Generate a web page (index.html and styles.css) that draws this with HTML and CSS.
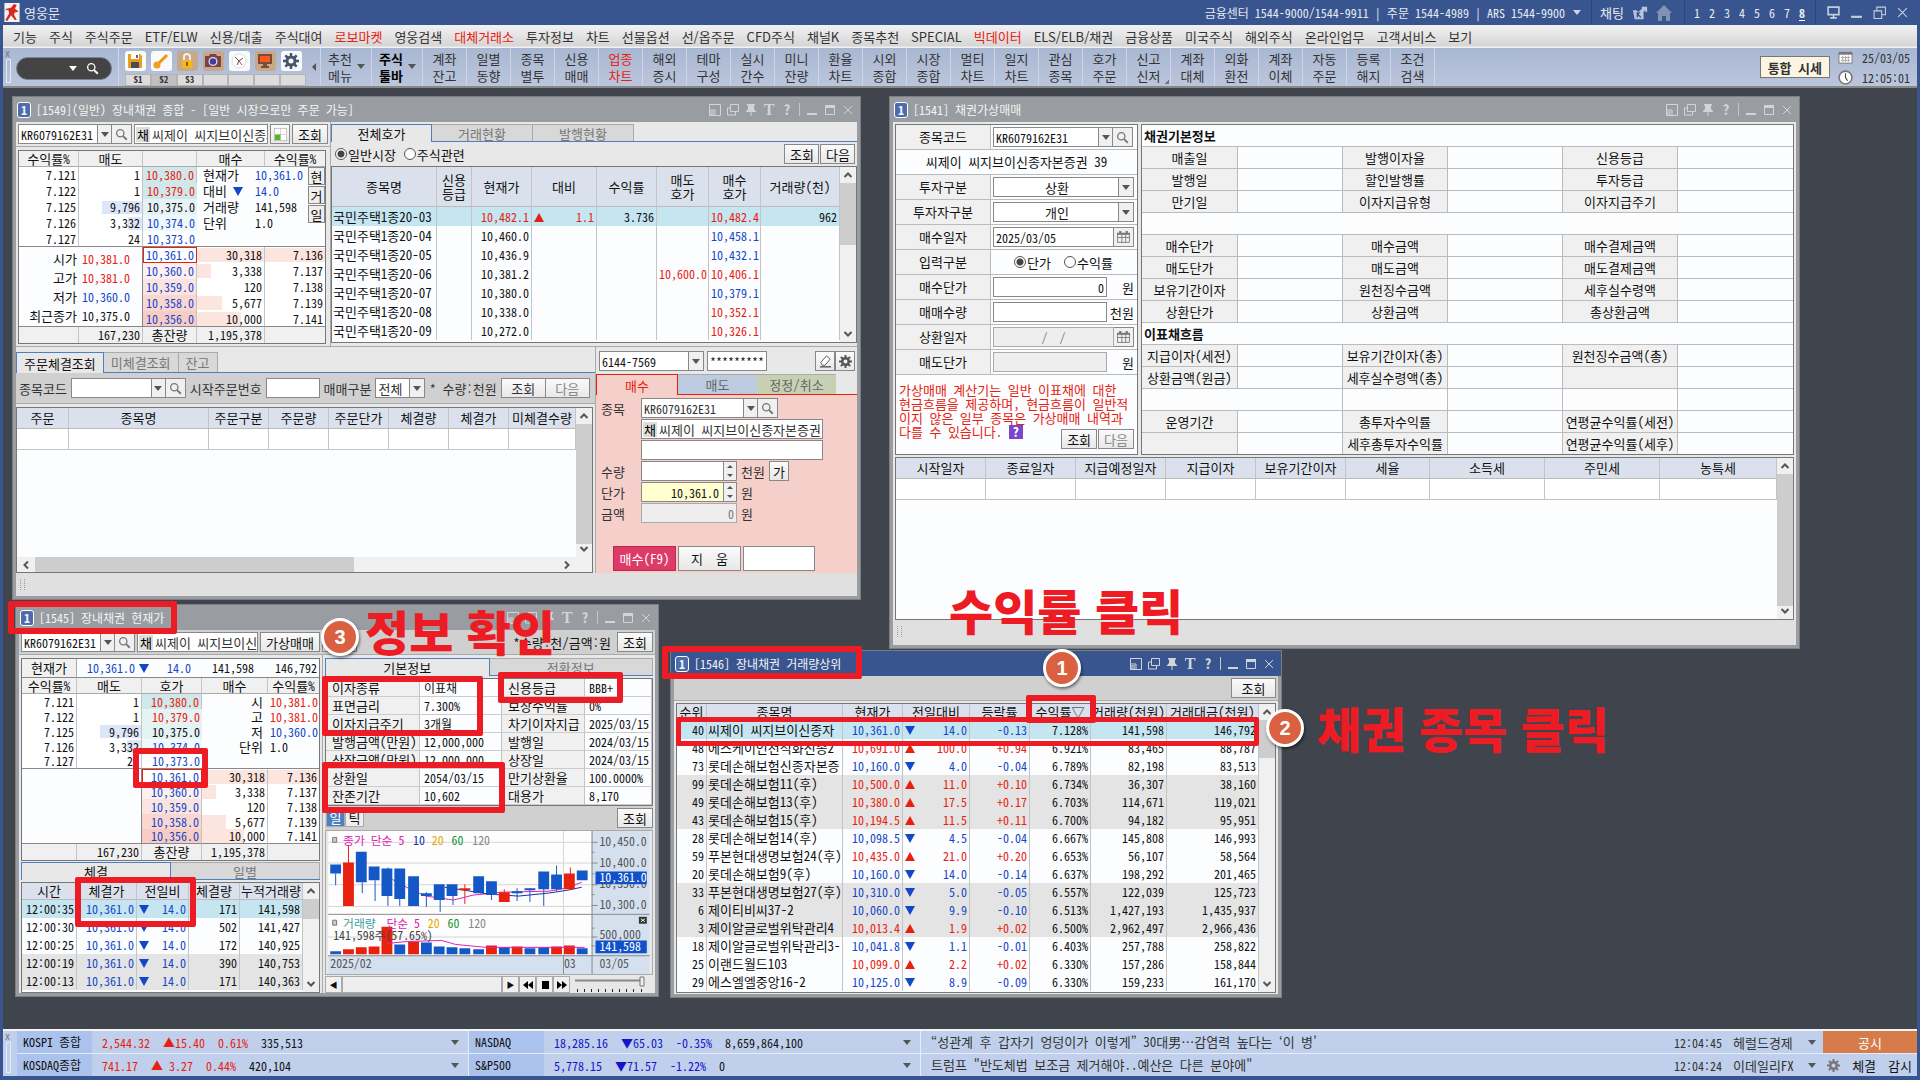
FILE: index.html
```html
<!DOCTYPE html>
<html lang="ko">
<head>
  <meta charset="UTF-8" />
  <title>영웅문</title>
  <link rel="stylesheet" href="styles.css">
</head>
<body>

  <!-- shared icons -->
  <svg class="defs" aria-hidden="true">
    <symbol id="i-search" viewBox="0 0 16 16"><circle cx="6.5" cy="6.5" r="4.5" fill="none" stroke="currentColor" stroke-width="1.6"/><path d="M10 10l4.5 4.5" stroke="currentColor" stroke-width="2.4"/></symbol>
    <symbol id="i-corner" viewBox="0 0 12 12"><path d="M.5 6V.5h11v11H6M.5 6v5.5H6V6z" fill="none" stroke="currentColor"/><path d="M1 7h4v4H1z" fill="currentColor" opacity=".6"/></symbol>
    <symbol id="i-copy" viewBox="0 0 12 12"><path d="M3.500 .5h8v7h-8zM3 4H.5v7h8V8" fill="none" stroke="currentColor"/></symbol>
    <symbol id="i-pin" viewBox="0 0 12 12"><path d="M2 0h8v1.500H9V5l2.500 3H.5L3 5V1.500H2zM5.500 8h1v4h-1z" fill="currentColor"/></symbol>
    <symbol id="i-min" viewBox="0 0 12 12"><path d="M1 9h10v2H1z" fill="currentColor"/></symbol>
    <symbol id="i-max" viewBox="0 0 12 12"><path d="M1.500 2.500h9v8h-9z" fill="none" stroke="currentColor"/><path d="M1 1h10v3H1z" fill="currentColor"/></symbol>
    <symbol id="i-close" viewBox="0 0 12 12"><path d="M2 2l8 8M10 2l-8 8" stroke="currentColor" fill="none"/></symbol>
    <symbol id="i-cal" viewBox="0 0 12 12"><path d="M.5 2.500h11v8H.5zM.5 6h11M4.500 3v8M8 3v8" fill="none" stroke="currentColor" stroke-width=".8"/><path d="M0 1.500h12v2H0zM2 0h2v2H2zM8 0h2v2H8z" fill="currentColor"/></symbol>
    <symbol id="i-gear" viewBox="0 0 16 16"><circle cx="8" cy="8" r="4" fill="none" stroke="currentColor" stroke-width="3"/><path d="M8 0v4M8 12v4M0 8h4M12 8h4M2.300 2.300L5 5M11 11l2.700 2.700M13.700 2.300L11 5M5 11l-2.700 2.700" stroke="currentColor" stroke-width="2.500"/></symbol>
    <symbol id="i-up" viewBox="0 0 10 10"><path d="M1.500 7L5 3.500 8.500 7" fill="none" stroke="currentColor" stroke-width="2"/></symbol>
    <symbol id="i-down" viewBox="0 0 10 10"><path d="M1.500 3L5 6.500 8.500 3" fill="none" stroke="currentColor" stroke-width="2"/></symbol>
    <symbol id="i-left" viewBox="0 0 10 10"><path d="M7 1.500L3.500 5 7 8.500" fill="none" stroke="currentColor" stroke-width="2"/></symbol>
    <symbol id="i-right" viewBox="0 0 10 10"><path d="M3 1.500L6.500 5 3 8.500" fill="none" stroke="currentColor" stroke-width="2"/></symbol>
  </svg>

  <header class="app-title">
    <svg class="logo" viewBox="0 0 16 20"><path d="M0 0h16v20H0z" fill="#f2f2f2"/><path d="M10 1l3 1-2 4 4 3-4 1-1 2 3 6h-2l-4-5-4 6-2-1 4-7-1-4-3 1 1-2 5-1z" fill="#d8281c"/></svg>
    <span>영웅문</span>
    <div class="contact">금융센터 1544-9000/1544-9911 | 주문 1544-4989 | ARS 1544-9900 <i class="tri"></i></div>
    <div class="chat">채팅
      <svg viewBox="0 0 18 16"><path d="M1 5h4l2 2 3-3h3v11H3zM11 1h6v6h-2V5l-4 3z" fill="#b9c4dc"/><path d="M6 7v6M6 10l3-3M7 10l3 3" stroke="#39558f" stroke-width="1.500" fill="none"/></svg>
      <svg viewBox="0 0 16 16"><path d="M8 0l8 8h-2v8h-4v-5H6v5H2V8H0z" fill="#8292b5"/></svg>
    </div>
    <nav class="pages"><a href="#">1</a><a href="#">2</a><a href="#">3</a><a href="#">4</a><a href="#">5</a><a href="#">6</a><a href="#">7</a><a href="#" class="on">8</a></nav>
    <div class="sys">
      <button aria-label="모니터"><svg viewBox="0 0 12 12"><path d="M1 1h10v7H1zM6 8v3M3 11h6" fill="none" stroke="currentColor" stroke-width="1.500"/></svg></button>
      <button aria-label="최소화"><svg><use href="#i-min"/></svg></button>
      <button aria-label="이전 크기"><svg viewBox="0 0 12 12"><path d="M1 4.500h7v7H1zM3.500 4V1h8v7H8" fill="none" stroke="currentColor"/></svg></button>
      <button aria-label="닫기"><svg><use href="#i-close"/></svg></button>
    </div>
  </header>

  <nav class="menu">
    <a href="#">기능</a><a href="#">주식</a><a href="#">주식주문</a><a href="#">ETF/ELW</a><a href="#">신용/대출</a><a href="#">주식대여</a><a href="#" class="red">로보마켓</a><a href="#">영웅검색</a><a href="#" class="red">대체거래소</a><a href="#">투자정보</a><a href="#">차트</a><a href="#">선물옵션</a><a href="#">선/옵주문</a><a href="#">CFD주식</a><a href="#">채널K</a><a href="#">종목추천</a><a href="#">SPECIAL</a><a href="#" class="red">빅데이터</a><a href="#">ELS/ELB/채권</a><a href="#">금융상품</a><a href="#">미국주식</a><a href="#">해외주식</a><a href="#">온라인업무</a><a href="#">고객서비스</a><a href="#">보기</a>
  </nav>

  <div class="toolbar">
    <div class="grip"><span>x</span><i></i></div>
    <div class="pill"><i class="tri"></i><svg><use href="#i-search"/></svg></div>
    <div class="quick">
      <div class="quick-icons">
        <button aria-label="저장"><svg viewBox="0 0 16 16"><path d="M1 1h12l2 2v12H1z" fill="#e8a020"/><path d="M4 1h8v5H4z" fill="#fff"/><path d="M4 9h8v6H4z" fill="#4b4b55"/><path d="M9 2h2v3H9z" fill="#666"/></svg></button>
        <button aria-label="도구"><svg viewBox="0 0 16 16"><path d="M14 2L4 12" stroke="#f0960e" stroke-width="3"/><circle cx="4" cy="12" r="3.500" fill="#f0a020"/></svg></button>
        <button class="tan" aria-label="잠금"><svg viewBox="0 0 16 16"><path d="M5 7V4a3 3 0 016 0v3" fill="none" stroke="#eee" stroke-width="2"/><path d="M3 7h10v8H3z" fill="#f4b81c"/><path d="M7 9h2v4H7z" fill="#8a5a00"/></svg></button>
        <button class="tan" aria-label="캡처"><svg viewBox="0 0 16 16"><path d="M0 3h4l1-2h6l1 2h4v11H0z" fill="#7b4048"/><circle cx="8" cy="8.500" r="4.500" fill="#ddd"/><circle cx="8" cy="8.500" r="3.200" fill="#463a9a"/></svg></button>
        <button aria-label="시계"><svg viewBox="0 0 16 16"><circle cx="8" cy="8" r="7" fill="#fff" stroke="#ddd"/><path d="M4 4l4 4 4-3M8 8l-2 4" stroke="#555" fill="none"/><path d="M8 8l3 4" stroke="#e33"/></svg></button>
        <button class="tan" aria-label="화면"><svg viewBox="0 0 16 16"><path d="M1 1h14v10H1zM6 11h4v2H6zM4 13h8v2H4z" fill="#7a4a3c"/><path d="M3 3h10v6H3z" fill="#fb5a1e"/></svg></button>
        <button aria-label="설정"><svg><use href="#i-gear"/></svg></button>
      </div>
      <div class="sets"><span>S1</span><span class="on">S2</span><span>S3</span><span></span><span></span><span></span><span></span></div>
    </div>
    <i class="back"></i>
    <button class="tool wide">추천<br>메뉴<i class="tri"></i></button>
    <button class="tool wide now">주식<br>툴바<i class="tri"></i></button>
    <div class="tools">
      <button class="tool">계좌<br>잔고</button><button class="tool">일별<br>동향</button><button class="tool">종목<br>별투</button><button class="tool">신용<br>매매</button><button class="tool red">업종<br>차트</button><button class="tool">해외<br>증시</button><button class="tool">테마<br>구성</button><button class="tool">실시<br>간수</button><button class="tool">미니<br>잔량</button><button class="tool">환율<br>차트</button><button class="tool">시외<br>종합</button><button class="tool">시장<br>종합</button><button class="tool">멀티<br>차트</button><button class="tool">일지<br>차트</button><button class="tool">관심<br>종목</button><button class="tool">호가<br>주문</button><button class="tool more">신고<br>신저</button><button class="tool">계좌<br>대체</button><button class="tool">외화<br>환전</button><button class="tool">계좌<br>이체</button><button class="tool">자동<br>주문</button><button class="tool">등록<br>해지</button><button class="tool">조건<br>검색</button>
    </div>
    <button class="unified">통합 시세</button>
    <div class="clock">
      <div><svg viewBox="0 0 16 14"><path d="M1 2h14v11H1z" fill="#fff" stroke="#777"/><path d="M1 1h14v3H1z" fill="#777"/><path d="M3 7h10M3 10h10M5 5v7M8 5v7M11 5v7" stroke="#aaa"/></svg>25/03/05</div>
      <div><svg viewBox="0 0 14 14"><circle cx="7" cy="7" r="6" fill="#fff" stroke="#777" stroke-width="1.500"/><path d="M7 3v4l2 3" stroke="#444" fill="none"/></svg>12:05:01</div>
    </div>
  </div>

  <main class="desk">

    <!-- 1549 -->
    <section class="win w1549">
      <div class="bar"><b>1</b><span>[1549](일반) 장내채권 종합 - [일반 시장으로만 주문 가능]</span>
        <div class="ctl"><button aria-label="도킹"><svg><use href="#i-corner"/></svg></button><button aria-label="복제"><svg><use href="#i-copy"/></svg></button><button aria-label="고정"><svg><use href="#i-pin"/></svg></button><button class="ser">T</button><button>?</button><i></i><button aria-label="최소화"><svg><use href="#i-min"/></svg></button><button aria-label="최대화"><svg><use href="#i-max"/></svg></button><button aria-label="닫기"><svg><use href="#i-close"/></svg></button></div>
      </div>
      <div class="body">
        <div class="top">
          <div class="left">
            <div class="code-row">
              <div class="combo"><input class="code" value="KR6079162E31" aria-label="종목코드"><button aria-label="목록"><i class="tri"></i></button><button aria-label="검색"><svg><use href="#i-search"/></svg></button></div>
              <div class="name"><em>채</em>씨제이 씨지브이신종자</div>
              <button class="btn sq" aria-label="화면분할"><svg viewBox="0 0 14 14"><path d="M0 0h14v14H0z" fill="#fff" stroke="#888"/><path d="M1 7h6v6H1z" fill="#56b52c"/><path d="M7 1v12M1 7h12" stroke="#aaa" stroke-dasharray="1 1"/></svg></button>
              <button class="btn">조회</button>
            </div>
            <table class="book">
              <colgroup><col class="c60"><col class="c64"><col class="c54"><col class="c68"><col></colgroup>
              <tr class="hd"><th>수익률%</th><th>매도</th><th></th><th>매수</th><th>수익률%</th></tr>
              <tr><td>7.121</td><td>1</td><td class="a1 up">10,380.0</td>
                <td colspan="2" rowspan="5" class="info">
                  <dl><dt>현재가</dt><dd class="dn">10,361.0</dd><dt>대비 <i class="d"></i></dt><dd class="dn">14.0</dd><dt>거래량</dt><dd>141,598</dd><dt>단위</dt><dd>1.0</dd></dl>
                  <div class="side"><button>현</button><button>거</button><button>일</button></div>
                </td></tr>
              <tr><td>7.122</td><td>1</td><td class="a1 up">10,379.0</td></tr>
              <tr><td>7.125</td><td class="ask" style="--bar:40px">9,796</td><td class="a2">10,375.0</td></tr>
              <tr><td>7.126</td><td class="ask" style="--bar:14px">3,332</td><td class="a3 dn">10,374.0</td></tr>
              <tr class="cut"><td>7.127</td><td>24</td><td class="dn">10,373.0</td></tr>
              <tr><td colspan="2" rowspan="5" class="ohlc">
                  <dl><dt>시가</dt><dd class="up">10,381.0</dd><dt>고가</dt><dd class="up">10,381.0</dd><dt>저가</dt><dd class="dn">10,360.0</dd><dt>최근종가</dt><dd>10,375.0</dd></dl></td>
                <td class="dn cur">10,361.0</td><td class="bid" style="--bar:100%">30,318</td><td class="bid" style="--bar:100%">7.136</td></tr>
              <tr><td class="b1 dn">10,360.0</td><td class="bid" style="--bar:14px">3,338</td><td>7.137</td></tr>
              <tr><td class="b2 dn">10,359.0</td><td>120</td><td>7.138</td></tr>
              <tr><td class="b3 dn">10,358.0</td><td class="bid" style="--bar:25px">5,677</td><td>7.139</td></tr>
              <tr class="cut"><td class="b4 dn">10,356.0</td><td class="bid" style="--bar:44px">10,000</td><td>7.141</td></tr>
              <tr class="hd"><td></td><td>167,230</td><td class="c">총잔량</td><td>1,195,378</td><td></td></tr>
            </table>
          </div>
          <div class="right">
            <div class="tabs t100"><button class="on">전체호가</button><button>거래현황</button><button>발행현황</button></div>
            <div class="opts"><label><input type="radio" name="mk" checked>일반시장</label><label><input type="radio" name="mk">주식관련</label><button class="btn push">조회</button><button class="btn">다음</button></div>
            <div class="grid">
              <table class="bonds">
                <colgroup><col class="c105"><col class="c35"><col class="c60"><col class="c65"><col class="c60"><col class="c52"><col class="c52"><col></colgroup>
                <tr><th>종목명</th><th>신용<br>등급</th><th>현재가</th><th>대비</th><th>수익률</th><th>매도<br>호가</th><th>매수<br>호가</th><th>거래량(천)</th></tr>
                <tr class="sel"><td class="l">국민주택1종20-03</td><td></td><td class="up">10,482.1</td><td class="up chg"><i class="u"></i>1.1</td><td>3.736</td><td></td><td class="up">10,482.4</td><td>962</td></tr>
                <tr><td class="l">국민주택1종20-04</td><td></td><td>10,460.0</td><td></td><td></td><td></td><td class="dn">10,458.1</td><td></td></tr>
                <tr><td class="l">국민주택1종20-05</td><td></td><td>10,436.9</td><td></td><td></td><td></td><td class="dn">10,432.1</td><td></td></tr>
                <tr><td class="l">국민주택1종20-06</td><td></td><td>10,381.2</td><td></td><td></td><td class="up">10,600.0</td><td class="up">10,406.1</td><td></td></tr>
                <tr><td class="l">국민주택1종20-07</td><td></td><td>10,380.0</td><td></td><td></td><td></td><td class="dn">10,379.1</td><td></td></tr>
                <tr><td class="l">국민주택1종20-08</td><td></td><td>10,338.0</td><td></td><td></td><td></td><td class="up">10,352.1</td><td></td></tr>
                <tr><td class="l">국민주택1종20-09</td><td></td><td>10,272.0</td><td></td><td></td><td></td><td class="up">10,326.1</td><td></td></tr>
              </table>
              <div class="vs"><svg><use href="#i-up"/></svg><i class="h60"></i><svg><use href="#i-down"/></svg></div>
            </div>
          </div>
        </div>

        <div class="mid">
          <div class="fills">
            <div class="tabs auto"><button class="on">주문체결조회</button><button>미체결조회</button><button>잔고</button></div>
            <div class="search">
              <label for="fcode">종목코드</label>
              <div class="combo"><input id="fcode" class="fc"><button aria-label="목록"><i class="tri"></i></button><button aria-label="검색"><svg><use href="#i-search"/></svg></button></div>
              <label for="fno">시작주문번호</label><input id="fno" class="fno">
              <label for="fkind">매매구분</label><div class="pick p50"><select id="fkind"><option>전체</option></select></div>
              <span>* 수량:천원</span>
              <button class="btn b45">조회</button><button class="btn b45 off">다음</button>
            </div>
            <div class="grid">
              <div class="cols">
                <table class="orders">
                  <colgroup><col class="c52"><col class="c140"><col class="c60"><col class="c60"><col class="c60"><col class="c60"><col class="c60"><col></colgroup>
                  <tr><th>주문</th><th>종목명</th><th>주문구분</th><th>주문량</th><th>주문단가</th><th>체결량</th><th>체결가</th><th>미체결수량</th></tr>
                  <tr><td></td><td></td><td></td><td></td><td></td><td></td><td></td><td></td></tr>
                </table>
                <div class="hs"><svg><use href="#i-left"/></svg><i></i><svg><use href="#i-right"/></svg></div>
              </div>
              <div class="vs"><svg><use href="#i-up"/></svg><i class="full"></i><svg><use href="#i-down"/></svg><span></span></div>
            </div>
          </div>

          <div class="order">
            <div class="acct">
              <div class="pick p105"><select aria-label="계좌" class="acno"><option>6144-7569</option></select></div>
              <input class="pw" value="*********" aria-label="비밀번호">
              <button class="btn sq push" aria-label="지우기"><svg viewBox="0 0 14 14"><path d="M2 8l6-7 4 3.500L6.500 11H3.500z" fill="#fff" stroke="#555"/><path d="M1 12h12v1.500H1z" fill="#555"/></svg></button><button class="btn sq" aria-label="설정"><svg><use href="#i-gear"/></svg></button>
            </div>
            <div class="otabs"><button class="buy">매수</button><button class="sell">매도</button><button class="fix">정정/취소</button></div>
            <div class="oform">
              <label for="oc">종목</label><div class="combo"><input id="oc" class="oc" value="KR6079162E31"><button aria-label="목록"><i class="tri"></i></button><button aria-label="검색"><svg><use href="#i-search"/></svg></button></div>
              <span></span><div class="name w182"><em>채</em>씨제이 씨지브이신종자본증권</div>
              <span></span><div class="name w182"></div>
              <label for="oq">수량</label><div class="unit"><input id="oq"><span class="spin"><i></i><i></i></span>천원<button class="btn sq ga">가</button></div>
              <label for="op">단가</label><div class="unit"><input id="op" class="yel" value="10,361.0"><span class="spin"><i></i><i></i></span>원</div>
              <label for="oa">금액</label><div class="unit"><input id="oa" class="dis" value="0" disabled>원</div>
            </div>
            <div class="obtn"><button class="go">매수(F9)</button><button class="btn">지　움</button><button class="btn blank" aria-label="메모"></button></div>
          </div>
        </div>
        <div class="status"></div>
      </div>
    </section>

    <!-- 1541 -->
    <section class="win w1541">
      <div class="bar"><b>1</b><span>[1541] 채권가상매매</span>
        <div class="ctl"><button aria-label="도킹"><svg><use href="#i-corner"/></svg></button><button aria-label="복제"><svg><use href="#i-copy"/></svg></button><button aria-label="고정"><svg><use href="#i-pin"/></svg></button><button>?</button><i></i><button aria-label="최소화"><svg><use href="#i-min"/></svg></button><button aria-label="최대화"><svg><use href="#i-max"/></svg></button><button aria-label="닫기"><svg><use href="#i-close"/></svg></button></div>
      </div>
      <div class="body">
        <div class="calc">
          <div class="calc-in">
            <div class="fr"><label for="cc">종목코드</label><div class="combo"><input id="cc" class="cc" value="KR6079162E31"><button aria-label="목록"><i class="tri"></i></button><button aria-label="검색"><svg><use href="#i-search"/></svg></button></div></div>
            <div class="fr one">씨제이 씨지브이신종자본증권 39</div>
            <div class="fr"><label for="c1">투자구분</label><div class="pick full"><select id="c1" class="mid-t"><option>상환</option></select></div></div>
            <div class="fr"><label for="c2">투자자구분</label><div class="pick full"><select id="c2" class="mid-t"><option>개인</option></select></div></div>
            <div class="fr"><label for="c3">매수일자</label><div class="combo"><input id="c3" class="cd" value="2025/03/05"><button aria-label="달력"><svg><use href="#i-cal"/></svg></button></div></div>
            <div class="fr"><span class="lb">입력구분</span><div class="rad"><label><input type="radio" name="in" checked>단가</label><label><input type="radio" name="in">수익률</label></div></div>
            <div class="fr"><label for="c4">매수단가</label><div class="num"><input id="c4" value="0"><span>원</span></div></div>
            <div class="fr"><label for="c5">매매수량</label><div class="num"><input id="c5"><span>천원</span></div></div>
            <div class="fr"><label for="c6">상환일자</label><div class="combo"><input id="c6" class="cd dis slash" value="/  /" disabled><button aria-label="달력"><svg><use href="#i-cal"/></svg></button></div></div>
            <div class="fr"><label for="c7">매도단가</label><div class="num"><input id="c7" class="dis" disabled><span>원</span></div></div>
            <div class="warn">
              <p>가상매매 계산기는 일반 이표채에 대한<br>현금흐름을 제공하며, 현금흐름이 일반적<br>이지 않은 일부 종목은 가상매매 내역과<br>다를 수 있습니다. <b>?</b></p>
              <div><button class="btn">조회</button><button class="btn off">다음</button></div>
            </div>
          </div>
          <table class="facts">
            <colgroup><col class="c96"><col class="c105"><col class="c105"><col class="c115"><col class="c115"><col></colgroup>
            <tr><td colspan="6" class="h">채권기본정보</td></tr>
            <tr><th>매출일</th><td></td><th>발행이자율</th><td></td><th>신용등급</th><td></td></tr>
            <tr><th>발행일</th><td></td><th>할인발행률</th><td></td><th>투자등급</th><td></td></tr>
            <tr><th>만기일</th><td></td><th>이자지급유형</th><td></td><th>이자지급주기</th><td></td></tr>
            <tr><td colspan="6"></td></tr>
            <tr><th>매수단가</th><td></td><th>매수금액</th><td></td><th>매수결제금액</th><td></td></tr>
            <tr><th>매도단가</th><td></td><th>매도금액</th><td></td><th>매도결제금액</th><td></td></tr>
            <tr><th>보유기간이자</th><td></td><th>원천징수금액</th><td></td><th>세후실수령액</th><td></td></tr>
            <tr><th>상환단가</th><td></td><th>상환금액</th><td></td><th>총상환금액</th><td></td></tr>
            <tr><td colspan="6" class="h">이표채흐름</td></tr>
            <tr><th>지급이자(세전)</th><td></td><th>보유기간이자(총)</th><td></td><th>원천징수금액(총)</th><td></td></tr>
            <tr><th>상환금액(원금)</th><td></td><th>세후실수령액(총)</th><td></td><th></th><td></td></tr>
            <tr><td colspan="2"></td><td></td><td></td><td></td><td></td></tr>
            <tr><th>운영기간</th><td></td><th>총투자수익률</th><td></td><th>연평균수익률(세전)</th><td></td></tr>
            <tr><th></th><td></td><th>세후총투자수익률</th><td></td><th>연평균수익률(세후)</th><td></td></tr>
          </table>
        </div>
        <div class="grid flow">
          <table class="orders">
            <colgroup><col class="c90"><col class="c90"><col class="c90"><col class="c90"><col class="c90"><col class="c84"><col class="c115"><col class="c115"><col></colgroup>
            <tr><th>시작일자</th><th>종료일자</th><th>지급예정일자</th><th>지급이자</th><th>보유기간이자</th><th>세율</th><th>소득세</th><th>주민세</th><th>농특세</th></tr>
            <tr><td></td><td></td><td></td><td></td><td></td><td></td><td></td><td></td><td></td></tr>
          </table>
          <div class="vs"><svg><use href="#i-up"/></svg><i class="full"></i><svg><use href="#i-down"/></svg></div>
        </div>
        <div class="status"></div>
      </div>
    </section>

    <!-- 1545 -->
    <section class="win w1545">
      <div class="bar"><b>1</b><span>[1545] 장내채권 현재가</span>
        <div class="ctl"><button aria-label="도킹"><svg><use href="#i-corner"/></svg></button><button aria-label="복제"><svg><use href="#i-copy"/></svg></button><button aria-label="고정"><svg><use href="#i-pin"/></svg></button><button class="ser">T</button><button>?</button><i></i><button aria-label="최소화"><svg><use href="#i-min"/></svg></button><button aria-label="최대화"><svg><use href="#i-max"/></svg></button><button aria-label="닫기"><svg><use href="#i-close"/></svg></button></div>
      </div>
      <div class="body">
        <div class="code-row gray">
          <div class="combo"><input class="code" value="KR6079162E31" aria-label="종목코드"><button aria-label="목록"><i class="tri"></i></button><button aria-label="검색"><svg><use href="#i-search"/></svg></button></div>
          <div class="name w120"><em>채</em>씨제이 씨지브이신</div>
          <button class="btn">가상매매</button><button class="btn b35" aria-label="주문"></button>
          <span class="push">*수량:천/금액:원</span><button class="btn look">조회</button>
        </div>
        <div class="split">
          <div class="left">
            <table class="now-row"><tr><th>현재가</th><td class="dn">10,361.0</td><td class="dn chg"><i class="d"></i>14.0</td><td>141,598</td><td>146,792</td></tr></table>
            <table class="book small">
              <colgroup><col class="c55"><col class="c65"><col class="c60"><col class="c66"><col></colgroup>
              <tr class="hd"><th>수익률%</th><th>매도</th><th>호가</th><th>매수</th><th>수익률%</th></tr>
              <tr><td>7.121</td><td>1</td><td class="a1 up">10,380.0</td>
                <td colspan="2" rowspan="5" class="info"><dl class="r"><dt>시</dt><dd class="up">10,381.0</dd><dt>고</dt><dd class="up">10,381.0</dd><dt>저</dt><dd class="dn">10,360.0</dd><dt>단위</dt><dd>1.0</dd></dl></td></tr>
              <tr><td>7.122</td><td>1</td><td class="a2 up">10,379.0</td></tr>
              <tr><td>7.125</td><td class="ask" style="--bar:41px">9,796</td><td class="a2">10,375.0</td></tr>
              <tr><td>7.126</td><td class="ask" style="--bar:14px">3,332</td><td class="a3 dn">10,374.0</td></tr>
              <tr class="cut"><td>7.127</td><td>24</td><td class="dn">10,373.0</td></tr>
              <tr><td colspan="2" rowspan="5" class="ohlc"></td><td class="dn cur">10,361.0</td><td class="bid" style="--bar:100%">30,318</td><td class="bid" style="--bar:100%">7.136</td></tr>
              <tr><td class="b1 dn">10,360.0</td><td class="bid" style="--bar:14px">3,338</td><td>7.137</td></tr>
              <tr><td class="b2 dn">10,359.0</td><td>120</td><td>7.138</td></tr>
              <tr><td class="b3 dn">10,358.0</td><td class="bid" style="--bar:24px">5,677</td><td>7.139</td></tr>
              <tr class="cut"><td class="b4 dn">10,356.0</td><td class="bid" style="--bar:42px">10,000</td><td>7.141</td></tr>
              <tr class="hd"><td></td><td>167,230</td><td class="c">총잔량</td><td>1,195,378</td><td></td></tr>
            </table>
            <div class="tabs half"><button class="on">체결</button><button>일별</button></div>
            <div class="grid">
              <table class="ticks">
                <colgroup><col class="c55"><col class="c60"><col class="c52"><col class="c51"><col></colgroup>
                <tr><th>시간</th><th>체결가</th><th>전일비</th><th>체결량</th><th>누적거래량</th></tr>
                <tr class="sel"><td>12:00:35</td><td class="dn">10,361.0</td><td class="dn chg"><i class="d"></i>14.0</td><td>171</td><td>141,598</td></tr>
                <tr><td>12:00:30</td><td class="dn">10,361.0</td><td class="dn chg"><i class="d"></i>14.0</td><td>502</td><td>141,427</td></tr>
                <tr><td>12:00:25</td><td class="dn">10,361.0</td><td class="dn chg"><i class="d"></i>14.0</td><td>172</td><td>140,925</td></tr>
                <tr class="alt"><td>12:00:19</td><td class="dn">10,361.0</td><td class="dn chg"><i class="d"></i>14.0</td><td>390</td><td>140,753</td></tr>
                <tr class="alt"><td>12:00:13</td><td class="dn">10,361.0</td><td class="dn chg"><i class="d"></i>14.0</td><td>171</td><td>140,363</td></tr>
              </table>
              <div class="vs"><svg><use href="#i-up"/></svg><i class="h20"></i><svg><use href="#i-down"/></svg></div>
            </div>
          </div>
          <div class="right">
            <div class="tabs half"><button class="on">기본정보</button><button>전환정보</button></div>
            <table class="basic">
              <colgroup><col class="c94"><col class="c82"><col class="c83"><col></colgroup>
              <tr><th>이자종류</th><td>이표채</td><th>신용등급</th><td>BBB+</td></tr>
              <tr><th>표면금리</th><td>7.300%</td><th>보장수익률</th><td>0%</td></tr>
              <tr><th>이자지급주기</th><td>3개월</td><th>차기이자지급</th><td>2025/03/15</td></tr>
              <tr><th>발행금액(만원)</th><td>12,000,000</td><th>발행일</th><td>2024/03/15</td></tr>
              <tr><th>상장금액(만원)</th><td>12,000,000</td><th>상장일</th><td>2024/03/15</td></tr>
              <tr><th>상환일</th><td>2054/03/15</td><th>만기상환율</th><td>100.0000%</td></tr>
              <tr><th>잔존기간</th><td>10,602</td><th>대용가</th><td>8,170</td></tr>
            </table>
            <div class="cbar"><button class="on">일</button><button>틱</button><button class="btn push">조회</button></div>
            <svg class="chart" viewBox="0 0 326 145">
              <path d="M0 0h326v145H0z" fill="#fdfdfe"/><path d="M267 0h59v145h-59zM0 126h326v19H0z" fill="#d5e0ef"/>
              <path d="M0 11.500h266M0 32.500h266M0 54.500h266M0 76.500h266M0 107.500h266M238.500 0v126" stroke="#d4d4d4"/>
              <path d="M0 84.500h326M267.500 0v145M0 126.500h326M238.500 126v19M267 11.500h6M267 32.500h6M267 54.500h6M267 75.500h6M267 107.500h6M267 21.500h3M267 43.500h3M267 64.500h3M267 98.500h3M267 116.500h3" stroke="#888" fill="none"/>
              <path d="M7.500 43v12M34.500 52v11M47.500 50v21M60.500 37v39M72.500 66v10M99.500 62v15M113.500 66v16M126.500 62v13M165.500 62v8M191.500 58v13M204.500 58v14M218.500 58v18M231.500 35v26" stroke="#1458c8"/>
              <path d="M20.500 14v20M138.500 54v20M178.500 59v6M245.500 37v8" stroke="#e8210f"/>
              <path d="M65 49l18 10 16 7 28 4 20-5 30-3 47-1 17-3 16-6" fill="none" stroke="#e020b0"/>
              <path d="M118 57l20 3 25 4 30 2 30-3 20-3 14-3" fill="none" stroke="#1530a0"/>
              <path d="M2 34h11v9H2zM28 21h11v31H28zM41 36h11v14H41zM54 38h11v28H54zM67 38h11v31H67zM81 46h11v30H81zM94 63h11v3H94zM107 54h11v16h-11zM120 54h11v12h-11zM147 46h11v17h-11zM160 51h11v14h-11zM186 61h11v2h-11zM199 58h11v2h-11zM213 41h11v18h-11zM226 44h11v15h-11zM252 40h11v10h-11z" fill="#1458c8"/>
              <path d="M15 32h11v44H15zM133 58h11v2h-11zM173 62h11v10h-11zM239 43h11v16h-11z" fill="#e8210f"/>
              <path d="M2 122h11v3H2zM67 115h11v10H67zM94 113h11v12H94zM107 117h11v8h-11zM120 118h11v7h-11zM133 119h11v6h-11zM147 120h11v5h-11zM173 118h11v7h-11zM199 119h11v6h-11zM213 118h11v7h-11zM252 119h11v6h-11z" fill="#1458c8"/>
              <path d="M15 120h11v5H15zM28 118h11v7H28zM41 117h11v8H41zM54 97h11v28H54zM81 112h11v13H81zM160 116h11v9h-11zM186 117h11v8h-11zM226 117h11v8h-11zM239 116h11v9h-11z" fill="#e8210f"/>
              <path d="M60 114l20-2 35-1 14 4 31 3h65l35 0" fill="none" stroke="#e020b0"/>
              <path d="M4.500 6.500h4v5h-4zM4.500 90.500h4v5h-4z" fill="#ccc" stroke="#777"/>
              <path d="M315 87h8v7h-8z" fill="#333"/><path d="M317 89l4 3M321 89l-4 3" stroke="#fff"/>
              <text x="275" y="58" fill="#555">10,350.0</text>
              <path d="M271 41h52v13h-52zM271 111h52v13h-52z" fill="#1050c8"/>
              <text x="15" y="14" fill="#e020b0">종가 단순 5</text><text x="86" y="14" fill="#1530b0">10</text><text x="105" y="14" fill="#e8a800">20</text><text x="125" y="14" fill="#109830">60</text><text x="146" y="14" fill="#888">120</text>
              <text x="15" y="98" fill="#40a0a0">거래량</text><text x="59" y="98" fill="#e020b0">단순 5</text><text x="101" y="98" fill="#e8a800">20</text><text x="121" y="98" fill="#109830">60</text><text x="142" y="98" fill="#888">120</text>
              <text x="5" y="111" fill="#444">141,598주(57.65%)</text>
              <text x="275" y="15" fill="#555">10,450.0</text><text x="275" y="36" fill="#555">10,400.0</text><text x="275" y="79" fill="#555">10,300.0</text><text x="275" y="52" fill="#fff">10,361.0</text>
              <text x="275" y="110" fill="#555">500,000</text><text x="275" y="122" fill="#fff">141,598</text>
              <text x="2" y="139" fill="#555">2025/02</text><text x="239" y="139" fill="#555">03</text><text x="275" y="139" fill="#555">03/05</text>
            </svg>
            <div class="play"><button aria-label="이전">◀</button><span></span><button aria-label="다음">▶</button><button aria-label="빨리 뒤로"><svg viewBox="0 0 10 8"><path d="M5 0v8L0 4zM10 0v8L5 4z"/></svg></button><button aria-label="정지"><svg viewBox="0 0 10 8"><path d="M2 0h7v8H2z"/></svg></button><button aria-label="빨리 앞으로"><svg viewBox="0 0 10 8"><path d="M0 0v8l5-4zM5 0v8l5-4z"/></svg></button>
              <svg class="slide" viewBox="0 0 70 16"><path d="M0 4.500h66" stroke="#888" stroke-width="2"/><path d="M65 1h4v9h-4z" fill="#eee" stroke="#777"/><path d="M2.500 13v3M9.500 13v3M16.500 13v3M23.500 13v3M30.500 13v3M37.500 13v3M44.500 13v3M51.500 13v3M58.500 13v3M66.500 13v3" stroke="#222"/></svg></div>
          </div>
        </div>
      </div>
    </section>

    <!-- 1546 -->
    <section class="win w1546 active">
      <div class="bar"><b>1</b><span>[1546] 장내채권 거래량상위</span>
        <div class="ctl"><button aria-label="도킹"><svg><use href="#i-corner"/></svg></button><button aria-label="복제"><svg><use href="#i-copy"/></svg></button><button aria-label="고정"><svg><use href="#i-pin"/></svg></button><button class="ser">T</button><button>?</button><i></i><button aria-label="최소화"><svg><use href="#i-min"/></svg></button><button aria-label="최대화"><svg><use href="#i-max"/></svg></button><button aria-label="닫기"><svg><use href="#i-close"/></svg></button></div>
      </div>
      <div class="body">
        <div class="code-row gray"><button class="btn b45 push">조회</button></div>
        <div class="grid rank">
          <table class="ticks">
            <colgroup><col class="c30"><col class="c136"><col class="c60"><col class="c67"><col class="c60"><col class="c61"><col class="c76"><col></colgroup>
            <tr><th>순위</th><th>종목명</th><th>현재가</th><th>전일대비</th><th>등락률</th><th>수익률▽</th><th>거래량(천원)</th><th>거래대금(천원)</th></tr>
            <tr class="sel"><td>40</td><td class="l">씨제이 씨지브이신종자</td><td class="dn">10,361.0</td><td class="dn chg"><i class="d"></i>14.0</td><td class="dn">-0.13</td><td>7.128%</td><td>141,598</td><td>146,792</td></tr>
            <tr><td>48</td><td class="l">에스케이인천석화신종2</td><td class="up">10,691.0</td><td class="up chg"><i class="u"></i>100.0</td><td class="up">+0.94</td><td>6.921%</td><td>83,465</td><td>88,787</td></tr>
            <tr><td>73</td><td class="l">롯데손해보험신종자본증</td><td class="dn">10,160.0</td><td class="dn chg"><i class="d"></i>4.0</td><td class="dn">-0.04</td><td>6.789%</td><td>82,198</td><td>83,513</td></tr>
            <tr class="alt"><td>99</td><td class="l">롯데손해보험11(후)</td><td class="up">10,500.0</td><td class="up chg"><i class="u"></i>11.0</td><td class="up">+0.10</td><td>6.734%</td><td>36,307</td><td>38,160</td></tr>
            <tr class="alt"><td>49</td><td class="l">롯데손해보험13(후)</td><td class="up">10,380.0</td><td class="up chg"><i class="u"></i>17.5</td><td class="up">+0.17</td><td>6.703%</td><td>114,671</td><td>119,021</td></tr>
            <tr class="alt"><td>43</td><td class="l">롯데손해보험15(후)</td><td class="up">10,194.5</td><td class="up chg"><i class="u"></i>11.5</td><td class="up">+0.11</td><td>6.700%</td><td>94,182</td><td>95,951</td></tr>
            <tr><td>28</td><td class="l">롯데손해보험14(후)</td><td class="dn">10,098.5</td><td class="dn chg"><i class="d"></i>4.5</td><td class="dn">-0.04</td><td>6.667%</td><td>145,808</td><td>146,993</td></tr>
            <tr><td>59</td><td class="l">푸본현대생명보험24(후)</td><td class="up">10,435.0</td><td class="up chg"><i class="u"></i>21.0</td><td class="up">+0.20</td><td>6.653%</td><td>56,107</td><td>58,564</td></tr>
            <tr><td>20</td><td class="l">롯데손해보험9(후)</td><td class="dn">10,160.0</td><td class="dn chg"><i class="d"></i>14.0</td><td class="dn">-0.14</td><td>6.637%</td><td>198,292</td><td>201,465</td></tr>
            <tr class="alt"><td>33</td><td class="l">푸본현대생명보험27(후)</td><td class="dn">10,310.0</td><td class="dn chg"><i class="d"></i>5.0</td><td class="dn">-0.05</td><td>6.557%</td><td>122,039</td><td>125,723</td></tr>
            <tr class="alt"><td>6</td><td class="l">제이티비씨37-2</td><td class="dn">10,060.0</td><td class="dn chg"><i class="d"></i>9.9</td><td class="dn">-0.10</td><td>6.513%</td><td>1,427,193</td><td>1,435,937</td></tr>
            <tr class="alt"><td>3</td><td class="l">제이알글로벌위탁관리4</td><td class="up">10,013.4</td><td class="up chg"><i class="u"></i>1.9</td><td class="up">+0.02</td><td>6.500%</td><td>2,962,497</td><td>2,966,436</td></tr>
            <tr><td>18</td><td class="l">제이알글로벌위탁관리3-</td><td class="dn">10,041.8</td><td class="dn chg"><i class="d"></i>1.1</td><td class="dn">-0.01</td><td>6.403%</td><td>257,788</td><td>258,822</td></tr>
            <tr><td>25</td><td class="l">이랜드월드103</td><td class="up">10,099.0</td><td class="up chg"><i class="u"></i>2.2</td><td class="up">+0.02</td><td>6.330%</td><td>157,286</td><td>158,844</td></tr>
            <tr><td>29</td><td class="l">에스엘엘중앙16-2</td><td class="dn">10,125.0</td><td class="dn chg"><i class="d"></i>8.9</td><td class="dn">-0.09</td><td>6.330%</td><td>159,233</td><td>161,170</td></tr>
          </table>
          <div class="vs"><svg><use href="#i-up"/></svg><i class="h40"></i><svg><use href="#i-down"/></svg></div>
        </div>
      </div>
    </section>

    <!-- guide marks over the windows -->
    <i class="mark m1"></i><i class="mark m2"></i><i class="mark m3"></i><i class="mark m4"></i><i class="mark m5"></i><i class="mark m6"></i><i class="mark m7"></i><i class="mark m8"></i><i class="mark m9"></i>
    <strong class="say s1">수익률 클릭</strong>
    <strong class="say s2">채권 종목 클릭</strong>
    <strong class="say s3">정보 확인</strong>
    <span class="step n1">1</span><span class="step n2">2</span><span class="step n3">3</span>
  </main>

  <footer class="ticker">
    <div class="grip"><span>x</span><i></i></div>
    <div class="rows">
      <div class="tk">
        <div class="lab">KOSPI 종합</div><div class="val"><span class="up">2,544.32</span><span class="up">▲15.40</span><span class="up">0.61%</span><span>335,513</span><i class="tri"></i></div>
        <div class="lab">NASDAQ</div><div class="val v2"><span class="nv">18,285.16</span><span class="nv">▼65.03</span><span class="nv">-0.35%</span><span>8,659,864,100</span><i class="tri"></i></div>
        <div class="news">“성관계 후 갑자기 엉덩이가 이렇게” 30대男…감염력 높다는 ‘이 병’</div>
        <div class="src">12:04:45<span>헤럴드경제</span><i class="tri"></i></div><div class="end"><button class="pub">공시</button></div>
      </div>
      <div class="tk">
        <div class="lab">KOSDAQ종합</div><div class="val"><span class="up">741.17</span><span class="up">▲ 3.27</span><span class="up">0.44%</span><span>420,104</span><i class="tri"></i></div>
        <div class="lab">S&amp;P500</div><div class="val v2"><span class="nv">5,778.15</span><span class="nv">▼71.57</span><span class="nv">-1.22%</span><span>0</span><i class="tri"></i></div>
        <div class="news">트럼프 "반도체법 보조금 제거해야..예산은 다른 분야에"</div>
        <div class="src">12:04:24<span>이데일리FX</span><i class="tri"></i></div><div class="end"><svg><use href="#i-gear"/></svg><a href="#">체결</a><a href="#">감시</a></div>
      </div>
    </div>
  </footer>

</body>
</html>
```
FILE: styles.css
```css
* { box-sizing: border-box; }

body {
  margin: 0;
  height: 100vh;
  display: flex;
  flex-direction: column;
  overflow: hidden;
  border: 3px solid #39558f;
  border-top: 0;
  border-bottom-width: 4px;
  background: #40444c;
  color: #111;
}

/* Hangul labels are 13px, figures and codes 12px */
body, input, select, button {
  font-family: "Noto Sans Mono CJK KR", "Noto Sans CJK KR", sans-serif;
  font-size: 13px;
  line-height: 15px;
}
td, input, dd, .acno, .contact, .pages, .clock, .bar, .ticker { font-size: 12px; }

button, input, select { margin: 0; padding: 0; border-radius: 0; color: inherit; }
button { border: 0; background: none; white-space: nowrap; }
a { color: inherit; text-decoration: none; }
svg { display: block; }
i, em { font-style: normal; }
.defs { position: absolute; width: 0; height: 0; }
.push { margin-left: auto; }
.red { color: #e8210f !important; }
.up { color: #e8210f; }
.dn { color: #1447c8; }
.nv { color: #1414c8; }

.tri {
  display: inline-block;
  border: 4px solid transparent;
  border-top: 5px solid #555;
  border-bottom: 0;
}

/* title, menu, toolbar */
.app-title {
  height: 25px;
  flex: none;
  display: flex;
  align-items: center;
  background: #39558f;
  color: #e6eaf2;
  padding-left: 1px;
}
.logo { width: 16px; height: 19px; margin-right: 4px; }
.contact { margin-left: auto; padding-right: 10px; display: flex; gap: 2px; align-items: center; white-space: pre; }
.app-title .tri { border-top-color: #ccd4e6; }
.chat { display: flex; gap: 8px; align-items: center; height: 25px; padding: 0 12px 0 8px; border-left: 1px solid #2c4476; }
.chat svg { width: 16px; height: 16px; }
.pages { display: flex; gap: 9px; padding: 0 10px 0 9px; border-left: 1px solid #2c4476; height: 25px; align-items: center; }
.pages .on { font-weight: bold; border-bottom: 1px solid #fff; }
.sys { display: flex; gap: 10px; padding: 0 8px 0 11px; border-left: 1px solid #2c4476; height: 25px; align-items: center; color: #c6cede; }
.sys svg { width: 13px; height: 13px; }

.menu {
  height: 23px;
  flex: none;
  display: flex;
  gap: 12px;
  align-items: center;
  padding-left: 10px;
  background: linear-gradient(#f2f2f2, #d6d6d6 90%, #fafafa);
  color: #333;
  white-space: nowrap;
  font-family: "Noto Sans CJK KR", sans-serif;
}

.toolbar {
  height: 40px;
  flex: none;
  display: flex;
  background: linear-gradient(#a9b7d1, #bbc6dc);
  border-bottom: 2px solid #888;
  color: #333;
}
.grip { width: 13px; flex: none; display: flex; flex-direction: column; align-items: flex-start; padding-left: 2px; color: #777; font-size: 10px; line-height: 10px; }
.grip i { flex: 1; width: 5px; border: 1px solid #e6ebf5; margin: 1px 0 3px 1px; }
.pill { width: 96px; height: 23px; margin: 9px 6px 0 0; border-radius: 12px; background: #444; border: 1px solid #7a8296; display: flex; align-items: center; justify-content: flex-end; gap: 9px; padding-right: 12px; color: #fff; }
.pill .tri { border-top-color: #fff; }
.pill svg { width: 13px; height: 13px; }
.quick { width: 194px; border-left: 1px solid #cfd8e8; padding: 3px 6px 0; }
.quick-icons { display: flex; gap: 5px; }
.quick-icons button { width: 21px; height: 20px; background: #fafafa; border-radius: 3px; padding: 2px; color: #47566f; }
.quick-icons .tan { background: #c9a888; }
.quick-icons svg { width: 16px; height: 16px; }
.sets { display: grid; grid-template-columns: repeat(7, 1fr); margin-top: 3px; font-size: 9px; line-height: 10px; height: 11px; font-weight: bold; }
.sets span { background: #dcdcdc; border: 1px solid #b4b4b4; text-align: center; }
.sets .on { background: #c0c0c0; }
.back { border: 4px solid transparent; border-right: 4px solid #555; border-left: 0; align-self: center; margin-right: 4px; }
.tool { width: 44px; height: 38px; border-left: 1px solid #ccd6e8; line-height: 17px; position: relative; }
.tool.wide { width: 51px; padding-right: 12px; }
.tool .tri { position: absolute; right: 6px; top: 16px; }
.more { background: linear-gradient(135deg, transparent 50%, #777 50%) right 1px bottom 2px / 5px 5px no-repeat; }
.now { font-weight: bold; color: #000; }
.tools { display: flex; border-right: 1px solid #ccd6e8; }
.unified { margin: 8px 0 0 auto; height: 22px; padding: 0 7px; background: #fdf5e3; border: 1px solid #777; font-weight: bold; }
.clock { width: 87px; padding: 1px 7px 0 8px; display: flex; flex-direction: column; gap: 4px; }
.clock div { display: flex; align-items: center; justify-content: space-between; height: 16px; }
.clock svg { width: 15px; height: 15px; }

/* desktop and windows */
.desk { position: relative; flex: 1; overflow: hidden; }
.win { position: absolute; display: flex; flex-direction: column; border: 1px solid #7b7e82; background: #999ca0; padding: 0 3px 3px; }
.w1549 { left: 9px; top: 8px; width: 849px; height: 504px; }
.w1541 { left: 886px; top: 8px; width: 911px; height: 553px; }
.w1545 { left: 12px; top: 516px; width: 644px; height: 393px; }
.w1546 { left: 667px; top: 562px; width: 612px; height: 348px; }
.active .bar { background: #39558f; margin: 0 -3px; padding: 0 6px 0 4px; }
.bar { height: 25px; flex: none; display: flex; align-items: center; gap: 5px; padding: 0 3px 0 1px; color: #f4f4f4; white-space: pre; }
.bar b { width: 14px; height: 16px; flex: none; border: 1px solid #fff; border-radius: 3px; background: #4d6cad; line-height: 14px; text-align: center; }
.ctl { margin-left: auto; display: flex; align-items: center; gap: 6px; color: #d2d4d8; }
.ctl button { width: 12px; font-size: 14px; font-weight: bold; }
.ctl .ser { font-family: "Liberation Serif", serif; font-size: 16px; }
.ctl svg { width: 12px; height: 12px; }
.ctl i { width: 1px; height: 13px; background: #c4c6ca; }
.body { flex: 1; min-height: 0; display: flex; flex-direction: column; background: #e8e8e8; overflow: hidden; }
.status { height: 23px; flex: none; background: #e0e0e0; margin-top: auto; padding: 6px 4px; }
.status::before { content: ""; display: block; width: 3px; height: 11px; border: 1px dotted #999; border-width: 0 1px; }

/* controls */
input:not([type]), select, .name, .num input { height: 20px; border: 1px solid #888; background: #fff; outline: 0; }
input:not([type]) { padding: 0 2px; min-width: 0; }
input:disabled, .dis { background: #eee !important; color: #777; border-color: #aaa !important; }
input[type=radio] { appearance: none; width: 12px; height: 12px; margin: 0 1px 0 0; border: 1px solid #555; border-radius: 50%; background: #fff; }
input[type=radio]:checked { background: radial-gradient(#444 0 3px, #fff 4px); }
label { white-space: nowrap; }
.btn { height: 20px; padding: 0 5px; border: 1px solid #888; background: linear-gradient(#fafafa, #e8e8e8); }
.btn.sq { width: 20px; padding: 0; display: grid; place-items: center; color: #555; }
.btn.sq svg { width: 13px; height: 13px; }
.btn.off { color: #888; }
.b35 { width: 35px; }
.b45 { width: 45px; }
.combo { display: flex; }
.combo button { width: 14px; height: 20px; border: 1px solid #888; border-left: 0; background: #f0f0f0; display: grid; place-items: center; flex: none; }
.combo button:last-child { width: 20px; color: #777; }
.combo svg { width: 13px; height: 13px; }
.code { width: 80px; }
.oc { width: 103px; }
.cc { width: 106px; }
.cd { flex: 1; width: 0; }
.fc { width: 81px; }
.fno { width: 54px; }
.pick { position: relative; }
.pick select { appearance: none; width: 100%; padding: 0 2px; display: block; }
.pick::after { content: ""; position: absolute; right: 4px; top: 8px; border: 4px solid transparent; border-top: 5px solid #555; border-bottom: 0; }
.pick::before { content: ""; position: absolute; right: 1px; top: 1px; bottom: 1px; width: 14px; background: #f0f0f0; border-left: 1px solid #888; }
.p50 { width: 50px; }
.p105 { width: 105px; }
.mid-t { text-align: center; padding-right: 15px !important; }
.name { flex: 1; display: flex; align-items: center; gap: 2px; padding: 0 1px; overflow: hidden; white-space: pre; color: #333; min-width: 0; }
.name em { background: #ddd; padding: 0 1px; color: #000; }
.w182 { width: 182px; flex: none; }
.w120 { flex: none; width: 121px; }
.code-row { display: flex; gap: 2px; padding: 2px 2px 2px; border-bottom: 1px solid #aaa; align-items: center; }
.gray { background: #d0d0d0; }
.tabs { display: flex; border-bottom: 1px solid #4d80c0; }
.tabs button { height: 17px; border: 1px solid #aaa; border-left: 0; border-bottom: 0; background: #d8d8d8; color: #777; }
.tabs .on { background: #e8e8e8; color: #111; border: 1px solid #4d80c0; border-bottom: 0; margin-bottom: -1px; height: 18px; }
.t100 button { width: 101px; }
.auto button { height: 20px; padding: 0 7px; }
.auto .on { height: 21px; }
.half button { flex: 1; }

/* tables */
table { border-collapse: separate; border-spacing: 0; table-layout: fixed; width: 100%; }
td, th { padding: 0 2px; font-weight: normal; white-space: nowrap; overflow: hidden; line-height: 14px; }
td { text-align: right; border-right: 1px solid #c4c4c4; }
th { border-right: 1px solid #c4c4c4; }
td.l { text-align: left; font-size: 13px; padding: 0 0 0 1px; }
td.c { text-align: center; font-size: 13px; }
.c30 { width: 30px; } .c35 { width: 35px; } .c51 { width: 51px; } .c52 { width: 52px; } .c54 { width: 54px; } .c55 { width: 55px; }
.c60 { width: 60px; } .c61 { width: 61px; } .c64 { width: 64px; } .c65 { width: 65px; } .c66 { width: 66px; } .c67 { width: 67px; } .c68 { width: 68px; }
.c76 { width: 76px; } .c82 { width: 82px; } .c83 { width: 83px; } .c84 { width: 84px; } .c90 { width: 90px; } .c94 { width: 94px; } .c96 { width: 96px; }
.c105 { width: 105px; } .c115 { width: 115px; } .c136 { width: 136px; } .c140 { width: 140px; }
.grid { display: flex; border: 1px solid #777; background: #fcfdff; min-height: 0; overflow: hidden; }
.grid > table, .cols { flex: 1; width: 0; align-self: flex-start; }
.grid th { background: #dae1ec; border-bottom: 1px solid #bbb; }
.sel td { background: #c5e5f1; }
.alt td { background: #e4e4e4; }
.chg i { float: left; margin-top: 3px; }
.d { display: inline-block; border: 5px solid transparent; border-top: 9px solid #1447c8; border-bottom: 0; }
.u { display: inline-block; border: 5px solid transparent; border-bottom: 9px solid #e8210f; border-top: 0; }
.vs { width: 16px; flex: none; background: #f0f0f0; display: flex; flex-direction: column; align-items: stretch; color: #555; }
.vs svg { width: 10px; height: 10px; margin: 3px; flex: none; }
.vs svg:last-of-type { margin-top: auto; }
.vs i { background: #cdcdcd; }
.vs .full { flex: 1; }
.vs span { height: 15px; }
.h20 { height: 20px; } .h40 { height: 38px; } .h60 { height: 62px; }

.book { border: 1px solid #777; background: #fff; }
.book td { height: 16px; }
.book .hd > * { height: 16px; background: #f0f0f0; border-bottom: 1px solid #aaa; }
.book tr:last-child > * { border-bottom: 0; }
.book .cut td, .book .info, .book .ohlc { border-bottom: 1px solid #888; }
.book td:last-child, .book th:last-child { border-right: 0; }
.a1 { background: #cfe8ec; } .a2 { background: #e6f3f5; } .a3 { background: #f0f8fb; }
.b1 { background: #fdf0ee; } .b2 { background: #fbe3df; } .b3 { background: #f9d6d0; } .b4 { background: #f8ccc4; }
.ask { background: linear-gradient(#dce6f8, #dce6f8) right / var(--bar) 13px no-repeat; }
.bid { background: linear-gradient(#fce4df, #fce4df) left / var(--bar) 14px no-repeat; }
.cur { outline: 1px solid #e8210f; outline-offset: -1px; }
.book .info { background: #fcfdff; padding: 0; vertical-align: top; position: relative; }
.info dl { display: grid; grid-template-columns: 52px 1fr; margin: 0 0 0 6px; text-align: left; line-height: 16px; }
.info dd, .ohlc dd { margin: 0; }
dt { font-size: 13px; }
.side { position: absolute; right: 0; top: 0; display: grid; gap: 1px; }
.side button { width: 17px; height: 18px; border: 1px solid #888; background: #eee; }
.book .ohlc { background: #fcfdff; border-right-color: #888; }
.ohlc dl { display: grid; grid-template-columns: 56px 1fr; gap: 0 5px; margin: 0; line-height: 19px; }
.ohlc dd { text-align: left; }
.small td { height: 15px; line-height: 14px; }
.small .hd > * { height: 16px; }
.info dl.r { grid-template-columns: 61px 1fr; gap: 0 7px; margin: 0; line-height: 15px; }
.r dt { text-align: right; }

/* 1549 */
.top { display: flex; height: 225px; border-bottom: 1px solid #aaa; }
.top .left { width: 315px; border-right: 1px solid #aaa; }
.top .book { width: 308px; margin: 3px 0 0 2px; }
.top .right { flex: 1; min-width: 0; display: flex; flex-direction: column; padding: 2px 0 3px; }
.opts { display: flex; align-items: center; height: 24px; gap: 1px; padding: 0 2px 0 4px; }
.opts label { display: flex; align-items: center; margin-right: 7px; }
.opts .btn { width: 35px; }
.top .grid { flex: 1; }
.bonds td { height: 19px; }
.bonds th { height: 40px; }
.mid { flex: 1; display: flex; min-height: 0; }
.fills { flex: 1; display: flex; flex-direction: column; min-width: 0; padding-top: 5px; border-right: 1px solid #aaa; }
.search { display: flex; align-items: center; gap: 4px; height: 31px; padding: 0 3px; background: #d0d0d0; border-bottom: 1px solid #aaa; margin-bottom: 3px; white-space: pre; color: #333; }
.search .btn + .btn { margin-left: -5px; }
.fills .grid { flex: 1; margin-right: 2px; }
.cols { align-self: stretch; display: flex; flex-direction: column; }
.orders th, .orders td { height: 21px; }
.orders td { background: #fff; border-bottom: 1px solid #c4c4c4; }
.hs { margin-top: auto; height: 15px; background: #f0f0f0; display: flex; color: #555; }
.hs svg { width: 10px; height: 10px; margin: 3px 4px; }
.hs i { width: 57%; background: #cdcdcd; }
.hs svg:last-child { margin-left: auto; }
.order { width: 261px; display: flex; flex-direction: column; padding-top: 4px; background: #e8e8e8; }
.acct { display: flex; gap: 3px; padding: 0 2px 3px 3px; }
.acct .btn + .btn { margin-left: -3px; }
.pw { width: 60px; text-align: right; }
.otabs { display: flex; border-bottom: 1px solid #e8210f; }
.otabs button { width: 79px; height: 20px; color: #666; border-top: 1px solid #aaa; }
.otabs .buy { width: 82px; height: 21px; margin-bottom: -1px; background: #f5cfca; color: #e8210f; border: 1px solid #e8210f; border-bottom: 0; }
.otabs .sell { background: #bccbe0; }
.otabs .fix { background: #c8d0b4; }
.oform { background: #f5cfca; display: grid; grid-template-columns: 40px 1fr; gap: 1px 0; padding: 3px 5px 23px; align-items: center; color: #333; }
.unit { display: flex; align-items: center; gap: 4px; }
.unit input { width: 96px; text-align: right; padding-right: 17px !important; color: #111; }
.spin { flex: none; width: 14px; height: 20px; margin-left: -18px; border: 1px solid #888; background: #f0f0f0; display: grid; place-items: center; }
.spin i { border: 3px solid transparent; border-top: 3px solid #555; border-bottom: 0; }
.spin i:first-child { border-top: 0; border-bottom: 3px solid #555; }
.unit .dis { padding-right: 2px !important; color: #777; }
.yel { background: #ffffd0 !important; }
.ga { color: #111 !important; }
.obtn { background: #f5cfca; flex: 1; display: flex; gap: 2px; padding-left: 17px; }
.obtn button { width: 63px; height: 25px; }
.obtn .blank { width: 72px; background: #fff; }
.go { background: #de3a68; color: #fff; border: 1px solid #c02850; }

/* 1541 */
.calc { display: flex; gap: 3px; padding: 2px 2px 0; height: 333px; }
.calc-in { width: 243px; flex: none; border: 1px solid #777; background: #fcfdff; display: flex; flex-direction: column; }
.fr { display: grid; grid-template-columns: 95px 1fr; align-items: center; height: 25px; border-bottom: 1px solid #bbb; }
.fr > label, .lb { height: 24px; line-height: 24px; text-align: center; background: #f0f0f0; border-right: 1px solid #bbb; }
.fr > div { margin: 0 3px 0 2px; min-width: 0; }
.fr.one { display: block; text-align: center; line-height: 24px; white-space: pre; }
.rad { display: flex; justify-content: center; gap: 13px; }
.rad label { display: flex; align-items: center; }
.num { display: flex; align-items: center; justify-content: space-between; }
.num input { width: 114px; text-align: right; }
.slash { text-align: center; }
.warn { padding: 8px 3px 0; color: #e8210f; }
.warn p { margin: 0; line-height: 14px; white-space: nowrap; }
.warn b { display: inline-block; width: 14px; background: #7c46c8; color: #fff; text-align: center; }
.warn div { display: flex; justify-content: flex-end; gap: 1px; margin-top: -10px; color: #111; }
.facts { flex: 1; width: 0; border: 1px solid #777; background: #fcfdff; }
.facts th, .facts td { height: 22px; border-bottom: 1px solid #bbb; border-right: 1px solid #bbb; }
.facts th { background: #f0f0f0; padding: 0; }
.facts .h { text-align: left; font-weight: bold; font-size: 13px; }
.facts tr > :last-child { border-right: 0; }
.facts tr:last-child > * { border-bottom: 0; height: 21px; }
.flow { flex: 1; margin: 2px 2px 0; }
.w1541 .status { height: 25px; }

/* 1545 */
.look { margin-left: 4px; }
.split { flex: 1; display: flex; min-height: 0; }
.split .left { width: 304px; padding: 3px 2px 0; display: flex; flex-direction: column; border-right: 1px solid #aaa; }
.split .right { flex: 1; min-width: 0; padding: 3px 2px 0; display: flex; flex-direction: column; }
.now-row, .small, .basic { flex: none; }
.now-row { border: 1px solid #777; border-bottom: 0; background: #fcfdff; }
.now-row td, .now-row th { height: 19px; border-right: 0; border-bottom: 1px solid #888; }
.now-row th { width: 55px; background: #f0f0f0; border-right: 1px solid #aaa; }
.now-row .chg { width: 56px; }
.now-row td:nth-child(2) { width: 60px; }
.small { border-top: 0; }
.split .left .tabs { margin: 1px 0 2px; }
.split .left .grid { flex: 1; }
.ticks td { height: 18px; }
.ticks th { height: 17px; padding: 0; }
.basic { border: 1px solid #777; background: #fcfdff; margin-top: 2px; }
.basic th, .basic td { text-align: left; height: 18px; border-bottom: 1px solid #ccc; padding: 0 0 0 4px; }
.basic th { background: #f0f0f0; padding-left: 6px; }
.cbar { display: flex; background: #d0d0d0; height: 24px; padding: 2px 0 0 1px; }
.cbar button:not(.btn) { width: 19px; height: 19px; border: 1px solid #aaa; background: #eee; }
.cbar .on { background: #4d80c0 !important; color: #fff; }
.chart { width: 100%; height: 145px; border: 1px solid #aaa; flex: none; }
.chart text { font-family: "Noto Sans Mono CJK KR", "Noto Sans CJK KR", sans-serif; font-size: 12px; }
.play { display: flex; height: 17px; margin-top: 1px; align-items: stretch; }
.play button { width: 17px; border: 1px solid #aaa; background: #f0f0f0; display: grid; place-items: center; font-size: 8px; line-height: 10px; }
.play span { width: 160px; border: 1px solid #aaa; background: #eee; }
.play button svg { width: 10px; height: 8px; }
.slide { width: 70px; height: 16px; margin-left: 5px; }

/* 1546 */
.rank { flex: 1; margin: 2px 2px 1px; }

/* guide marks */
.mark { position: absolute; border: 6px solid #ed1c24; border-radius: 2px; }
.m1 { left: 5px; top: 513px; width: 169px; height: 33px; }
.m2 { left: 72px; top: 789px; width: 121px; height: 50px; }
.m3 { left: 130px; top: 660px; width: 75px; height: 40px; }
.m4 { left: 319px; top: 588px; width: 161px; height: 60px; }
.m5 { left: 319px; top: 674px; width: 183px; height: 51px; }
.m6 { left: 495px; top: 584px; width: 125px; height: 31px; }
.m7 { left: 659px; top: 558px; width: 200px; height: 33px; }
.m8 { left: 1023px; top: 607px; width: 70px; height: 28px; }
.m9 { left: 673px; top: 629px; width: 583px; height: 29px; border-width: 5px; }
.say { position: absolute; font-family: "Noto Sans CJK KR", sans-serif; font-weight: 900; font-size: 48px; line-height: 56px; color: #ed1c24; white-space: nowrap; }
.s1 { left: 946px; top: 493px; }
.s2 { left: 1314px; top: 611px; }
.s3 { left: 362px; top: 514px; }
.step { position: absolute; width: 38px; height: 38px; border: 3px solid #fff; border-radius: 50%; background: #d96040; color: #fff; font: bold 20px/32px "Liberation Sans", sans-serif; text-align: center; box-shadow: 1px 2px 3px rgba(0, 0, 0, .5); }
.n1 { left: 1040px; top: 561px; }
.n2 { left: 1263px; top: 621px; }
.n3 { left: 318px; top: 530px; }

/* ticker */
.ticker { height: 47px; flex: none; display: flex; background: #c0d0ec; border-top: 2px solid #f4f4f4; white-space: pre; }
.ticker .grip { width: 14px; }
.rows { flex: 1; display: flex; flex-direction: column; }
.tk { flex: 1; display: flex; align-items: stretch; line-height: 21px; }
.tk + .tk { border-top: 1px solid #e6edf8; }
.lab { width: 75px; padding-left: 6px; background: #abc3ec; }
.val { width: 377px; display: flex; align-items: center; gap: 13px; padding: 0 9px 0 10px; border-right: 1px solid #e6edf8; }
.val .tri, .src .tri { margin-left: auto; }
.news { flex: 1; padding-left: 10px; color: #333; font-size: 13px; }
.src { width: 149px; display: flex; align-items: center; gap: 11px; padding-right: 7px; color: #333; }
.src span, .end { font-size: 13px; }
.end { width: 94px; display: flex; align-items: center; justify-content: flex-end; gap: 12px; padding-right: 5px; }
.end svg { width: 13px; height: 13px; color: #777; }
.pub { width: 94px; height: 100%; margin-right: -5px; background: #d67c4a; color: #fff; }
```
